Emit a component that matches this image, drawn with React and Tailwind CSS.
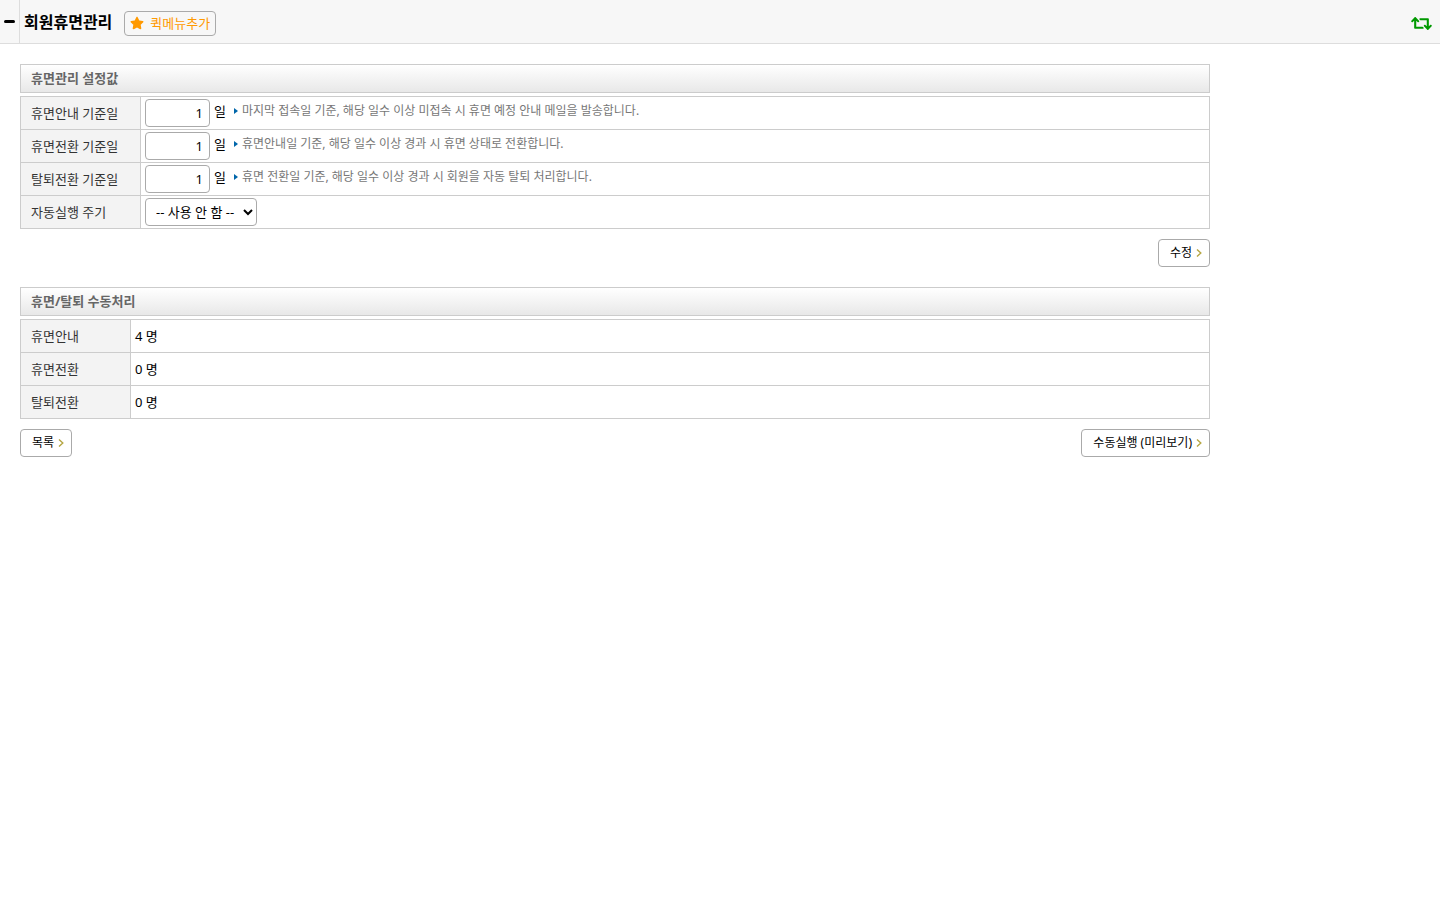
import { useState } from "react";
import { FaStar, FaRetweet } from "react-icons/fa";

const settingRows = [
  {
    id: "noticeDays",
    label: "휴면안내 기준일",
    help: "마지막 접속일 기준, 해당 일수 이상 미접속 시 휴면 예정 안내 메일을 발송합니다.",
  },
  {
    id: "dormantDays",
    label: "휴면전환 기준일",
    help: "휴면안내일 기준, 해당 일수 이상 경과 시 휴면 상태로 전환합니다.",
  },
  {
    id: "leaveDays",
    label: "탈퇴전환 기준일",
    help: "휴면 전환일 기준, 해당 일수 이상 경과 시 회원을 자동 탈퇴 처리합니다.",
  },
];

const manualRows = [
  { label: "휴면안내", count: 4 },
  { label: "휴면전환", count: 0 },
  { label: "탈퇴전환", count: 0 },
];

function SectionTitle({ children }) {
  return (
    <h2 className="h-[29px] px-2.5 mb-[3px] border border-[#cccccc] bg-linear-to-b from-white to-[#e8e8e8] text-[13px] leading-[27px] font-bold text-[#666666]">
      {children}
    </h2>
  );
}

function ArrowButton({ children }) {
  return (
    <button
      type="button"
      className="flex items-center gap-1 h-7 pl-[11px] pr-[7px] rounded border border-[#aaaaaa] bg-white text-[12px] text-black"
    >
      {children}
      <svg width="6" height="8" viewBox="0 0 6 8" fill="none" aria-hidden="true">
        <path d="M1 0.5L4.8 4L1 7.5" stroke="#b5a642" strokeWidth="1.4" />
      </svg>
    </button>
  );
}

function RowHead({ children, className }) {
  return (
    <th
      scope="row"
      className={`border border-[#cccccc] bg-[#f3f3f3] pl-2.5 text-left font-normal text-[#333333] ${className}`}
    >
      {children}
    </th>
  );
}

function App() {
  const [days, setDays] = useState({
    noticeDays: "1",
    dormantDays: "1",
    leaveDays: "1",
  });
  const [cycle, setCycle] = useState("none");

  return (
    <div className="min-h-screen bg-white font-['Noto_Sans','Noto_Sans_CJK_KR',sans-serif] text-[13px] leading-5 text-black">
      <header className="flex items-center h-11 border-b border-[#dddddd] bg-[#f7f7f7]">
        <button
          type="button"
          aria-label="메뉴 접기"
          className="flex items-center justify-center w-5 h-full border-r border-[#dddddd]"
        >
          <span className="w-[11px] h-[3px] rounded-xs bg-black" />
        </button>
        <h1 className="ml-1 text-[16px] font-bold">회원휴면관리</h1>
        <button
          type="button"
          className="flex items-center gap-1.5 h-[25px] ml-3 mt-[3px] px-[5px] rounded border border-[#aaaaaa] text-[13px] text-[#ff9900]"
        >
          <FaStar size={14} />
          퀵메뉴추가
        </button>
        <button
          type="button"
          aria-label="새로고침"
          className="ml-auto mr-2 mt-1 text-[#009900]"
        >
          <FaRetweet size={21} />
        </button>
      </header>

      <main className="w-full max-w-[1230px] p-5">
        <SectionTitle>휴면관리 설정값</SectionTitle>
        <table className="w-full border-collapse">
          <tbody>
            {settingRows.map((row) => (
              <tr key={row.id} className="h-[33px]">
                <RowHead className="w-[120px]">
                  <label htmlFor={row.id}>{row.label}</label>
                </RowHead>
                <td className="border border-[#cccccc] px-1">
                  <div className="flex items-start">
                    <input
                      id={row.id}
                      type="text"
                      value={days[row.id]}
                      onChange={(e) =>
                        setDays({ ...days, [row.id]: e.target.value })
                      }
                      className="w-[65px] h-7 px-1.5 rounded border border-[#aaaaaa] bg-white text-right"
                    />
                    <span className="ml-1 leading-6">일</span>
                    <span className="flex items-center gap-1 ml-2 text-[12px] leading-6 text-[#777777]">
                      <svg width="4" height="6" viewBox="0 0 4 6" aria-hidden="true">
                        <path d="M0 0L4 3L0 6Z" fill="#0066aa" />
                      </svg>
                      {row.help}
                    </span>
                  </div>
                </td>
              </tr>
            ))}
            <tr className="h-[33px]">
              <RowHead className="w-[120px]">
                <label htmlFor="cycle">자동실행 주기</label>
              </RowHead>
              <td className="border border-[#cccccc] px-1">
                <select
                  id="cycle"
                  value={cycle}
                  onChange={(e) => setCycle(e.target.value)}
                  className="block w-28 h-7 pl-1.5 rounded border border-[#aaaaaa] bg-white"
                >
                  <option value="none">-- 사용 안 함 --</option>
                </select>
              </td>
            </tr>
          </tbody>
        </table>
        <div className="flex justify-end mt-2.5 mb-5">
          <ArrowButton>수정</ArrowButton>
        </div>

        <SectionTitle>휴면/탈퇴 수동처리</SectionTitle>
        <table className="w-full border-collapse">
          <tbody>
            {manualRows.map((row) => (
              <tr key={row.label} className="h-[33px]">
                <RowHead className="w-[110px]">{row.label}</RowHead>
                <td className="border border-[#cccccc] px-1">{row.count} 명</td>
              </tr>
            ))}
          </tbody>
        </table>
        <div className="flex justify-between mt-2.5">
          <ArrowButton>목록</ArrowButton>
          <ArrowButton>수동실행 (미리보기)</ArrowButton>
        </div>
      </main>
    </div>
  );
}

export default App;
